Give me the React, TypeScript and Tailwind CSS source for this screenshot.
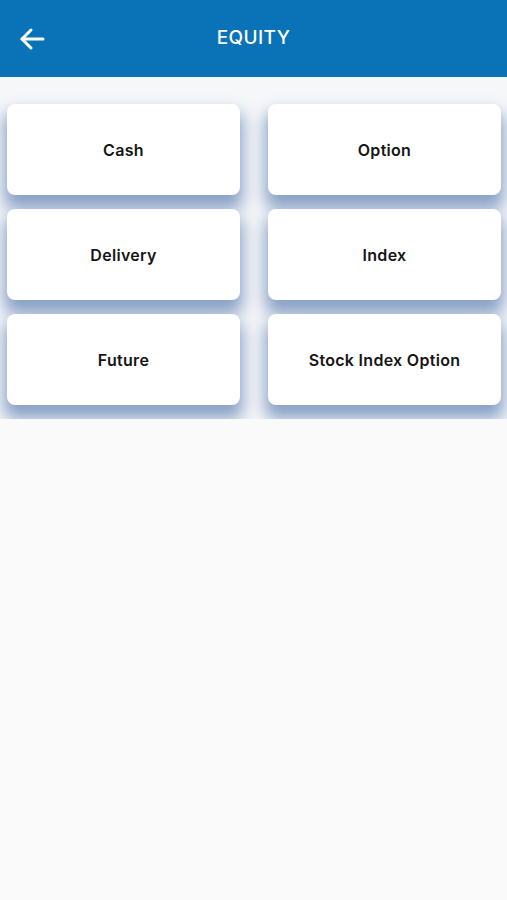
import React from 'react';

const items: string[] = ['Cash', 'Option', 'Delivery', 'Index', 'Future', 'Stock Index Option'];

const App: React.FC = () => {
    return (
        <div className="min-h-screen w-full bg-[#fafafa]" style={{ fontFamily: 'Inter, "Noto Sans", sans-serif' }}>
            <header className="relative flex h-[77px] items-center justify-center bg-[#0a72b6]">
                <button className="absolute left-[18px] top-[26px] flex h-[26px] w-[28px] items-center justify-center text-white">
                    <svg width="26" height="24" viewBox="0 0 26 24" fill="none" stroke="currentColor" strokeWidth="3" strokeLinecap="round" strokeLinejoin="round">
                        <path d="M24 12H3" />
                        <path d="M12 3L3 12l9 9" />
                    </svg>
                </button>
                <h1 className="text-[19px] font-medium tracking-[0.4px] text-white">EQUITY</h1>
            </header>

            <div className="overflow-hidden bg-[#f6f7f9] pl-[7px] pr-[6px] pt-[27px] pb-[14px]">
                <div className="grid grid-cols-2 gap-x-[28px] gap-y-[14px]">
                    {items.map(label => (
                        <div
                            key={label}
                            className="flex h-[91px] items-center justify-center rounded-[8px] bg-white shadow-[0_11px_16px_3px_rgba(65,105,165,0.6)]"
                        >
                            <span className="text-[16px] font-semibold tracking-[0.3px] text-[#151515]">{label}</span>
                        </div>
                    ))}
                </div>
            </div>
        </div>
    );
};

export default App;
